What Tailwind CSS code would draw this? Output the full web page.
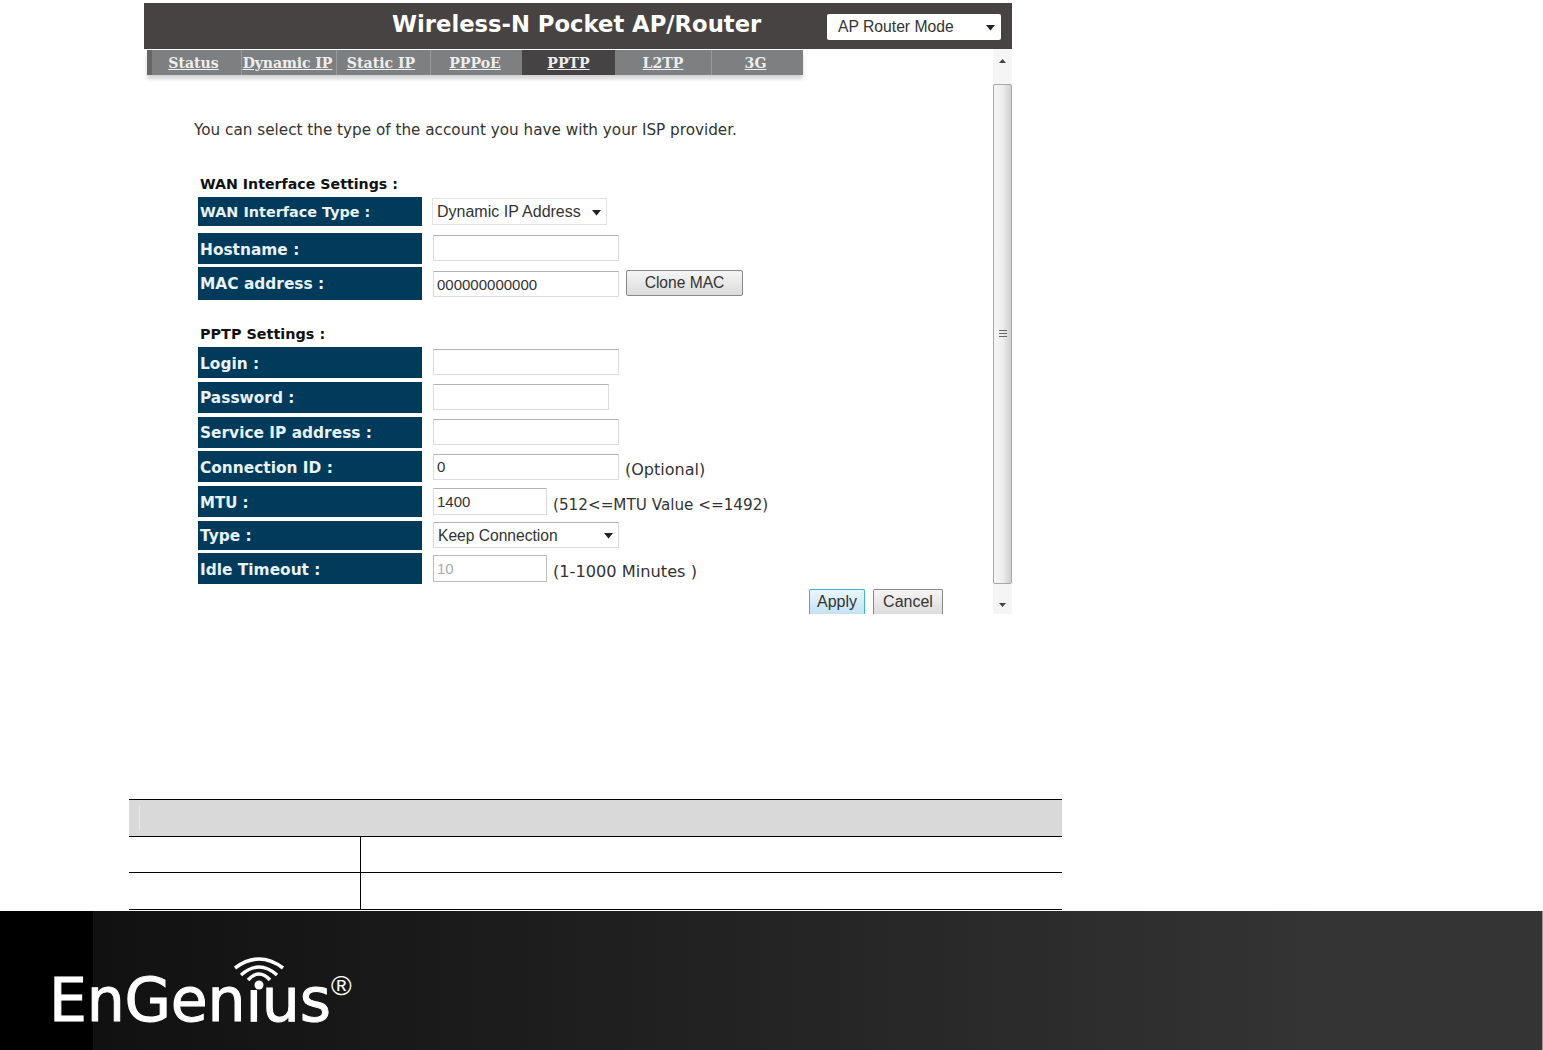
<!DOCTYPE html>
<html>
<head>
<meta charset="utf-8">
<script src="https://cdn.jsdelivr.net/npm/@tailwindcss/browser@4"></script>
</head>
<body class="bg-white overflow-hidden">
<div class="relative w-[1543px] h-[1050px] flex flex-col overflow-hidden">
  <!-- embedded screenshot -->
  <div class="ml-[144px] mt-[3px] w-[868px] h-[611px] flex flex-col shrink-0">
    <div class="h-[46px] bg-[#474342] flex items-center shrink-0">
      <div class="ml-[248px] w-[369px] -mt-[4px] text-center whitespace-nowrap font-['DejaVu_Sans'] font-bold text-[22.7px] text-white">Wireless-N Pocket AP/Router</div>
      <div class="relative ml-[66px] w-[174px] h-[26px] bg-white rounded-[2px] mt-[1px] flex items-center pl-[11px] font-['Liberation_Sans'] text-[15.7px] text-[#333]">AP Router Mode
        <svg class="absolute right-[5px] top-[11px]" width="11" height="6" viewBox="0 0 11 6"><path d="M1 0h9L5.5 5.5z" fill="#222"/></svg>
      </div>
    </div>
    <div class="flex flex-1 min-h-0">
      <div class="flex-1 min-w-0 flex flex-col">
        <div class="mt-[1px] ml-[3px] h-[25px] flex w-[656px] shadow-[0_4px_4px_#d4d4d4] font-['DejaVu_Serif'] font-bold text-[14.1px] text-[#eeeeee] underline shrink-0">
          <div class="w-[94px] bg-[#7d7f80] border-l-[5px] border-[#666] flex items-center justify-center pt-[2px] pr-[6px]">Status</div>
          <div class="w-[95px] bg-[#7d7f80] border-l border-[#999] flex items-center justify-center whitespace-nowrap tracking-[-0.1px] pt-[2px] pr-[3px]">Dynamic IP</div>
          <div class="w-[94px] bg-[#7d7f80] border-l border-[#999] flex items-center justify-center pt-[2px] pr-[5px]">Static IP</div>
          <div class="w-[92px] bg-[#7d7f80] border-l border-[#999] flex items-center justify-center pt-[2px] pr-[3px]">PPPoE</div>
          <div class="w-[93px] bg-[#454344] flex items-center justify-center pt-[2px]">PPTP</div>
          <div class="w-[96px] bg-[#7d7f80] flex items-center justify-center pt-[2px]">L2TP</div>
          <div class="w-[92px] bg-[#7d7f80] border-l border-[#999] flex items-center justify-center pt-[2px] pr-[4px]">3G</div>
        </div>
        <div class="mt-[45px] ml-[50px] font-['DejaVu_Sans'] text-[15.22px] leading-[20px] text-[#333] whitespace-nowrap">You can select the type of the account you have with your ISP provider.</div>

        <div class="ml-[54px] mt-[34px] flex flex-col font-['DejaVu_Sans'] text-[#333]">
          <div class="pl-[2px] h-[20px] leading-[20px] font-bold text-[14.2px] text-[#111]">WAN Interface Settings :</div>
          <div class="flex h-[29px] mt-[3px]">
            <div class="w-[224px] bg-[#003b5c] pl-[2px] pt-[2px] flex items-center font-bold text-[14.4px] text-[#e8f2f7]">WAN Interface Type :</div>
            <div class="relative ml-[10px] mt-[1px] w-[175px] h-[27px] border border-[#e2e2e2] flex items-center pl-[4px] font-['Liberation_Sans'] text-[16px] text-[#333]">Dynamic IP Address
              <svg class="absolute right-[4px] top-[11px]" width="11" height="6" viewBox="0 0 11 6"><path d="M1 0h9L5.5 5.5z" fill="#222"/></svg>
            </div>
          </div>
          <div class="flex h-[31px] mt-[7px]">
            <div class="w-[224px] bg-[#003b5c] pl-[2px] pt-[4px] flex items-center font-bold text-[15.4px] text-[#e8f2f7]">Hostname :</div>
            <input class="ml-[11px] mt-[2px] w-[186px] h-[26px] border border-[#dcdcdc] border-t-[#b4b4b4] bg-white outline-none" value="">
          </div>
          <div class="flex h-[33px] mt-[3px]">
            <div class="w-[224px] bg-[#003b5c] pl-[2px] pt-[2px] flex items-center font-bold text-[15.4px] text-[#e8f2f7]">MAC address :</div>
            <input class="ml-[11px] mt-[4px] w-[186px] h-[26px] pl-[3px] border border-[#dcdcdc] border-t-[#b4b4b4] bg-white outline-none font-['Liberation_Sans'] text-[15px] text-[#333]" value="000000000000">
            <button class="ml-[7px] mt-[3px] w-[117px] h-[26px] rounded-[2px] border border-[#8a8a8a] bg-gradient-to-b from-[#f5f5f5] to-[#dcdcdc] font-['Liberation_Sans'] text-[15.6px] text-[#333] leading-[22px]">Clone MAC</button>
          </div>

          <div class="pl-[2px] h-[20px] leading-[20px] mt-[24px] font-bold text-[14.4px] text-[#111]">PPTP Settings :</div>
          <div class="flex h-[31px] mt-[3px]">
            <div class="w-[224px] bg-[#003b5c] pl-[2px] pt-[4px] flex items-center font-bold text-[15.4px] text-[#e8f2f7]">Login :</div>
            <input class="ml-[11px] mt-[2px] w-[186px] h-[26px] border border-[#dcdcdc] border-t-[#b4b4b4] bg-white outline-none" value="">
          </div>
          <div class="flex h-[31px] mt-[4px]">
            <div class="w-[224px] bg-[#003b5c] pl-[2px] pt-[2px] flex items-center font-bold text-[15.4px] text-[#e8f2f7]">Password :</div>
            <input class="ml-[11px] mt-[2px] w-[176px] h-[26px] border border-[#dcdcdc] border-t-[#b4b4b4] bg-white outline-none" value="">
          </div>
          <div class="flex h-[31px] mt-[4px]">
            <div class="w-[224px] bg-[#003b5c] pl-[2px] pt-[2px] flex items-center font-bold text-[15.4px] text-[#e8f2f7]">Service IP address :</div>
            <input class="ml-[11px] mt-[2px] w-[186px] h-[26px] border border-[#dcdcdc] border-t-[#b4b4b4] bg-white outline-none" value="">
          </div>
          <div class="flex h-[31px] mt-[3px]">
            <div class="w-[224px] bg-[#003b5c] pl-[2px] pt-[4px] flex items-center font-bold text-[15.4px] text-[#e8f2f7]">Connection ID :</div>
            <input class="ml-[11px] mt-[3px] w-[186px] h-[26px] pl-[3px] pb-[2px] border border-[#dcdcdc] border-t-[#b4b4b4] bg-white outline-none font-['Liberation_Sans'] text-[15px] text-[#333]" value="0">
            <span class="ml-[6px] mt-[9px] text-[16px] leading-[20px] whitespace-nowrap">(Optional)</span>
          </div>
          <div class="flex h-[31px] mt-[4px]">
            <div class="w-[224px] bg-[#003b5c] pl-[2px] pt-[4px] flex items-center font-bold text-[15px] text-[#e8f2f7]">MTU :</div>
            <input class="ml-[11px] mt-[2px] w-[114px] h-[27px] pl-[3px] border border-[#dcdcdc] border-t-[#b4b4b4] bg-white outline-none font-['Liberation_Sans'] text-[15px] text-[#333]" value="1400">
            <span class="ml-[6px] mt-[9px] text-[15.2px] leading-[20px] whitespace-nowrap">(512&lt;=MTU Value &lt;=1492)</span>
          </div>
          <div class="flex h-[29px] mt-[4px]">
            <div class="w-[224px] bg-[#003b5c] pl-[2px] pt-[2px] flex items-center font-bold text-[15.4px] text-[#e8f2f7]">Type :</div>
            <div class="relative ml-[11px] mt-[1px] w-[186px] h-[26px] pt-[1px] border border-[#dcdcdc] border-t-[#b4b4b4] flex items-center pl-[4px] font-['Liberation_Sans'] text-[15.6px] text-[#333]">Keep Connection
              <svg class="absolute right-[4px] top-[10px]" width="11" height="6" viewBox="0 0 11 6"><path d="M1 0h9L5.5 5.5z" fill="#222"/></svg>
            </div>
          </div>
          <div class="flex h-[31px] mt-[3px]">
            <div class="w-[224px] bg-[#003b5c] pl-[2px] pt-[4px] flex items-center font-bold text-[15.4px] text-[#e8f2f7]">Idle Timeout :</div>
            <input disabled class="ml-[11px] mt-[2px] w-[114px] h-[27px] pl-[3px] border border-[#bdbdbd] bg-white outline-none font-['Liberation_Sans'] text-[15px] text-[#aaa]" value="10">
            <span class="ml-[6px] mt-[9px] text-[16.2px] leading-[20px] whitespace-nowrap">(1-1000 Minutes )</span>
          </div>
          <div class="flex h-[25px] mt-[5px] ml-[611px] gap-[8px] font-['Liberation_Sans'] text-[16px] text-[#333]">
            <button class="w-[56px] h-[25px] rounded-t-[2px] border border-b-0 border-[#3fb0d8] bg-gradient-to-b from-[#eaf6fd] to-[#c4e2f4] leading-[22px]">Apply</button>
            <button class="w-[70px] h-[25px] rounded-t-[2px] border border-b-0 border-[#8a8a8a] bg-gradient-to-b from-[#f5f5f5] to-[#dcdcdc] leading-[22px]">Cancel</button>
          </div>
        </div>
      </div>
      <!-- scrollbar -->
      <div class="w-[19px] bg-[#f5f5f5] flex flex-col items-center shrink-0">
        <div class="h-[35px] w-full flex justify-center pt-[10px] shrink-0">
          <svg width="7" height="4" viewBox="0 0 7 4"><path d="M3.5 0L7 4H0z" fill="#444"/></svg>
        </div>
        <div class="w-full h-[500px] flex items-center justify-center rounded-[2px] border border-[#a8a8a8] bg-gradient-to-r from-[#f6f6f6] via-[#ededed] to-[#cfcfcf] shrink-0">
          <svg width="8" height="8" viewBox="0 0 8 8"><path d="M0 .5h8M0 3.5h8M0 6.5h8" stroke="#666"/></svg>
        </div>
        <div class="flex-1 w-full flex justify-center pt-[19px]">
          <svg width="7" height="4" viewBox="0 0 7 4"><path d="M0 0h7L3.5 4z" fill="#444"/></svg>
        </div>
      </div>
    </div>
  </div>

  <!-- document table -->
  <div class="ml-[129px] mt-[185px] w-[933px] h-[111px] flex flex-col border-t border-black shrink-0">
    <div class="h-[37px] bg-[#d9d9d9] border-b border-black pl-[10px] pt-[5px] shrink-0">
      <div class="w-[1px] h-[25px] bg-[#e8e8e8]"></div>
    </div>
    <div class="flex h-[36px] border-b border-black shrink-0">
      <div class="w-[232px] border-r border-black"></div>
    </div>
    <div class="flex h-[37px] border-b border-black shrink-0">
      <div class="w-[232px] border-r border-black"></div>
    </div>
  </div>

  <!-- footer -->
  <div class="flex-1 min-h-0 mt-[1px] flex bg-black">
    <div class="w-[93px] bg-black shrink-0"></div>
    <div class="flex-1 bg-gradient-to-r from-[#111111] to-[#343434] to-[85%]"></div>
    <div class="w-[1px] bg-[#999] shrink-0"></div>
  </div>
  <div class="absolute left-[50px] top-[955px] w-[310px] h-[75px]">
    <svg class="absolute left-[180px] top-0" width="60" height="36" viewBox="0 0 60 36" fill="none" stroke="#fff" stroke-width="3.5">
      <path d="M5 13Q29 -5 53 13"/><path d="M11 20Q29 4 47 20"/><path d="M18 25Q29 13 40 25"/>
      <circle cx="29" cy="30" r="4.5" fill="#fff" stroke="none"/>
    </svg>
    <div class="absolute left-[-1px] top-[10px] font-['DejaVu_Sans'] text-[60px] leading-[70px] tracking-[-0.2px] text-white whitespace-nowrap [-webkit-text-stroke:1px_#fff]">EnGen<span class="inline-block [clip-path:inset(25px_0_0_0)]">i</span>us</div>
    <div class="absolute left-[281px] top-[17px] font-['Liberation_Sans'] text-[28px] leading-[28px] text-white">®</div>
  </div>
</div>
</body>
</html>
